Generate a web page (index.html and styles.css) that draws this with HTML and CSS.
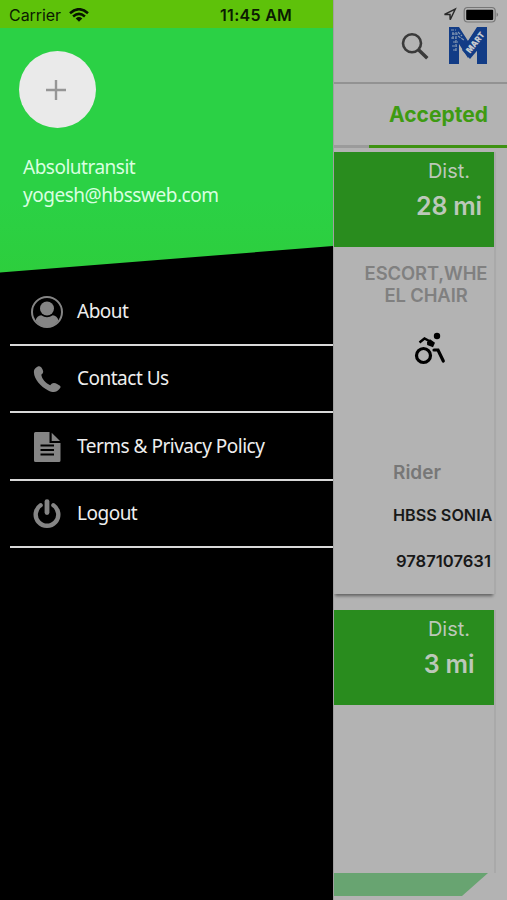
FILE: index.html
```html
<!DOCTYPE html>
<html lang="en">
<head>
<meta charset="utf-8">
<title>Absolutransit</title>
<link rel="stylesheet" href="styles.css">
</head>
<body>
<div class="app">
  <aside class="drawer">
    <div class="status">
      <span class="carrier">Carrier</span>
      <svg class="wifi" viewBox="0 0 20 14" width="20" height="14"><g fill="none" stroke="#071500" stroke-width="2.5"><path d="M1 5.2Q10-2.8 19 5.2M4.1 8.5Q10 3.2 15.9 8.5"/></g><path d="M6.7 10.4Q10 7.6 13.3 10.4L10 13.7Z" fill="#071500"/></svg>
      <span class="time">11:45 AM</span>
    </div>
    <header class="profile">
      <div class="avatar"><svg viewBox="0 0 20 20" width="20" height="20"><path d="M10 0V20M0 10H20" stroke="#969696" stroke-width="2.4"/></svg></div>
      <div class="name">Absolutransit</div>
      <div class="email">yogesh@hbssweb.com</div>
      <svg class="slope" viewBox="0 0 334 27" width="334" height="27"><path d="M0 26.5L334 0V27H0Z" fill="#000"/></svg>
    </header>
    <nav class="menu">
      <a class="item"><svg viewBox="0 0 32 32" width="32" height="32"><circle cx="16" cy="16" r="15" fill="none" stroke="#858585" stroke-width="2"/><circle cx="16" cy="12.5" r="7" fill="#858585"/><path d="M4.5 24.5Q6 19.7 10.2 19.3Q16 23 21.8 19.3Q26 19.7 27.5 24.5Q23 31 16 31T4.5 24.5Z" fill="#858585"/></svg><span class="about">About</span></a>
      <a class="item"><svg viewBox="0 0 32 32" width="32" height="32"><path transform="translate(0 .8)" d="M5.2 3.8C8 1.4 9.9 2.4 11 4.7C12.7 7.8 12.7 9.1 10.3 11C11 15.4 14.3 19.1 19.2 21.4C21.4 18.7 23.4 18.7 26.5 20.5C30.2 22.3 30.2 23.3 28.4 25.3C25.4 29 21.7 28.8 17.2 26.6C9.5 22.7 3.2 15.5 2.9 8.4C2.8 6.3 3.6 5 5.2 3.8Z" fill="#858585"/></svg><span class="contact">Contact Us</span></a>
      <a class="item"><svg viewBox="0 0 32 32" width="32" height="32"><path d="M4.5 1H18.5V12H29.5V29.5Q29.5 31 28 31H4.5Q3 31 3 29.5V2.5Q3 1 4.5 1Z" fill="#858585"/><path d="M20.7 1.8L29 9.9H20.7Z" fill="#858585"/><path d="M9.5 14.5H23M9.5 19H23M9.5 23.5H23" stroke="#000" stroke-width="2"/></svg><span class="terms">Terms &amp; Privacy Policy</span></a>
      <a class="item"><svg viewBox="0 0 32 32" width="32" height="32"><path d="M9.6 7.2A11.3 11.3 0 1 0 22.4 7.2" fill="none" stroke="#858585" stroke-width="4.4" stroke-linecap="round"/><path d="M16 3.6V14.6" stroke="#858585" stroke-width="4.8" stroke-linecap="round"/></svg><span class="logout">Logout</span></a>
    </nav>
  </aside>
  <main class="page">
    <div class="sysicons">
      <svg viewBox="0 0 60 28" width="60" height="28"><path d="M2.5 14.4L13.2 9.2L8.2 19.7L8 14.4Z" fill="none" stroke="#292929" stroke-width="1.5"/><rect x="22.2" y="7.5" width="31" height="14.5" rx="3.5" fill="none" stroke="#777" stroke-width="1.2"/><rect x="24.2" y="9.7" width="27" height="10.3" rx="1" fill="#000"/><path d="M54.6 12.5Q57.6 14.7 54.6 17Z" fill="#777"/></svg>
    </div>
    <header class="toolbar">
      <svg viewBox="0 0 28 28" width="28" height="28"><circle cx="11" cy="10.3" r="9" fill="none" stroke="#3a3a3a" stroke-width="2.6"/><path d="M17.5 16.8L26.3 25.3" stroke="#3a3a3a" stroke-width="3.5"/></svg>
      <svg class="logo" viewBox="0 0 38 38" width="38" height="38"><path d="M0 0H10L19 14L28 0H38V37H28V17L19 31L10 17V37H0Z" fill="#123c86"/><path d="M13 23L29 0H38V12L21 32Z" fill="#123c86"/><path d="M2 3H7M3 7H9M2 11H7M4 15H9M3 19H8M4 23H8M9 5L13 9M9 9L15 13M7 5V25M4 5V13" stroke="#8498b3" stroke-width="1.2" stroke-dasharray="3 1"/><text transform="translate(21.3 26.7) rotate(-52)" textLength="24" lengthAdjust="spacingAndGlyphs">MART</text></svg>
    </header>
    <div class="tab">Accepted</div>
    <section class="cards">
      <article class="card">
        <div class="distance"><span class="dist">Dist.</span><strong class="miles">28 mi</strong></div>
        <div class="needs">ESCORT,WHE<br>EL CHAIR</div>
        <svg class="chair" viewBox="0 0 32 34" width="32" height="34"><circle cx="9.5" cy="23.5" r="7" fill="none" stroke="#000" stroke-width="3.2"/><circle cx="23" cy="4" r="3.2"/><path d="M5.5 10.5L10.5 6.5L18 10.5" fill="none" stroke="#000" stroke-width="2.4"/><path d="M13 10L16 7.2L21 10.8L19 15.2L13.2 13Z"/><path d="M20 18H24L29.3 29" fill="none" stroke="#000" stroke-width="3.2" stroke-linecap="round"/></svg>
        <div class="rider">Rider</div>
        <div class="person">HBSS SONIA</div>
        <div class="phone">9787107631</div>
      </article>
      <article class="card second">
        <div class="distance"><span class="dist">Dist.</span><strong class="miles short">3 mi</strong></div>
      </article>
    </section>
    <svg class="bottom" viewBox="0 0 173 27" width="173" height="27"><path d="M0 0H154L128 23H0Z" fill="#68a471"/></svg>
  </main>
</div>
</body>
</html>
```
FILE: styles.css
```css
* { box-sizing: border-box; }
body { margin: 0; width: 507px; height: 900px; overflow: hidden; font-family: Inter, sans-serif; background: #b3b3b3; }
svg { display: block; flex: none; }
.app { display: grid; grid-template-columns: 333px 174px; height: 900px; }
.drawer { background: #000; height: 900px; overflow: hidden; font-family: "Noto Sans", sans-serif; }
.status { height: 28px; background: #5ec20a; display: flex; align-items: center; padding: 2px 0 0 9px; color: #0b1b02; font: 16px/26px Inter, sans-serif; white-space: nowrap; }
.carrier { width: 60px; letter-spacing: -.05px; }
.time { margin-left: 131px; font-weight: 600; letter-spacing: .3px; }
.wifi { margin-top: -1px; }
.profile { height: 245px; background: linear-gradient(#2bd145 0%, #2bd145 70%, #2dce3d 100%); display: flex; flex-direction: column; padding-top: 23px; color: #d9ffe0; font-size: 19px; line-height: 28px; white-space: nowrap; }
.avatar { width: 77px; height: 77px; margin-left: 19px; border-radius: 50%; background: #eaeaea; display: grid; place-items: center; padding: 0 3px 0 0; }
.name { margin: 25px 0 0 23px; letter-spacing: -.5px; }
.email { margin-left: 23px; letter-spacing: -.47px; }
.slope { margin-top: auto; }
.menu { padding: 5px 0 0 10px; }
.item { height: 67.5px; border-bottom: 2px solid #d8d8d8; display: flex; align-items: center; padding: 2px 0 0 21px; gap: 14px; color: #eee; font-size: 19px; letter-spacing: -.5px; white-space: nowrap; }
.item span { position: relative; top: -1px; }
.page { height: 900px; background: #b3b3b3; display: flex; flex-direction: column; overflow: hidden; border-left: 1px solid #a0a0a0; }
.sysicons { height: 26px; padding-left: 108px; }
.toolbar { height: 58px; border-bottom: 2px solid #929292; display: flex; align-items: flex-start; padding: 7px 0 0 67px; }
.logo { margin: -6px 0 0 20px; }
.logo text { fill: #c5c9cf; font: 900 8.5px Inter, sans-serif; }
.tab { height: 64px; padding: 16px 0 0 55px; color: #3e9b12; font-size: 21px; line-height: 30px; font-weight: 700; border-bottom: 3px solid; border-image: linear-gradient(90deg, #9b9b9b 36px, #3e9212 36px) 1; white-space: nowrap; }
.cards { height: 725px; padding-top: 4px; }
.card { width: 160px; height: 442px; display: flex; flex-direction: column; box-shadow: 2px 0 0 #a9a9a9, 0 3px 3px -1px #606060; }
.second { height: 263px; margin-top: 16px; box-shadow: 2px 0 0 #a9a9a9; }
.distance { height: 95px; background: #298c1e; display: flex; flex-direction: column; padding: 6px 0 0 80px; color: #bcc8b9; }
.dist { width: 70px; text-align: center; font-size: 20px; line-height: 27px; }
.miles { width: 70px; text-align: center; font-size: 25px; line-height: 43px; font-weight: 600; letter-spacing: -.2px; white-space: nowrap; }
.needs { margin: 15px 0 0 25px; width: 134px; text-align: center; font-size: 18.4px; line-height: 22px; font-weight: 600; letter-spacing: -.1px; color: #808080; white-space: nowrap; }
.chair { margin: 26px 0 0 80px; }
.rider { margin: 94px 0 0 59px; font-size: 19px; line-height: 26px; font-weight: 600; color: #777; }
.person { margin: 18px 0 0 59px; font-size: 16.2px; line-height: 22px; font-weight: 600; color: #181818; white-space: nowrap; }
.phone { margin: 24px 0 0 62px; font-size: 16.6px; line-height: 22px; font-weight: 600; color: #181818; white-space: nowrap; }
.bottom { margin-top: 0; }
```
